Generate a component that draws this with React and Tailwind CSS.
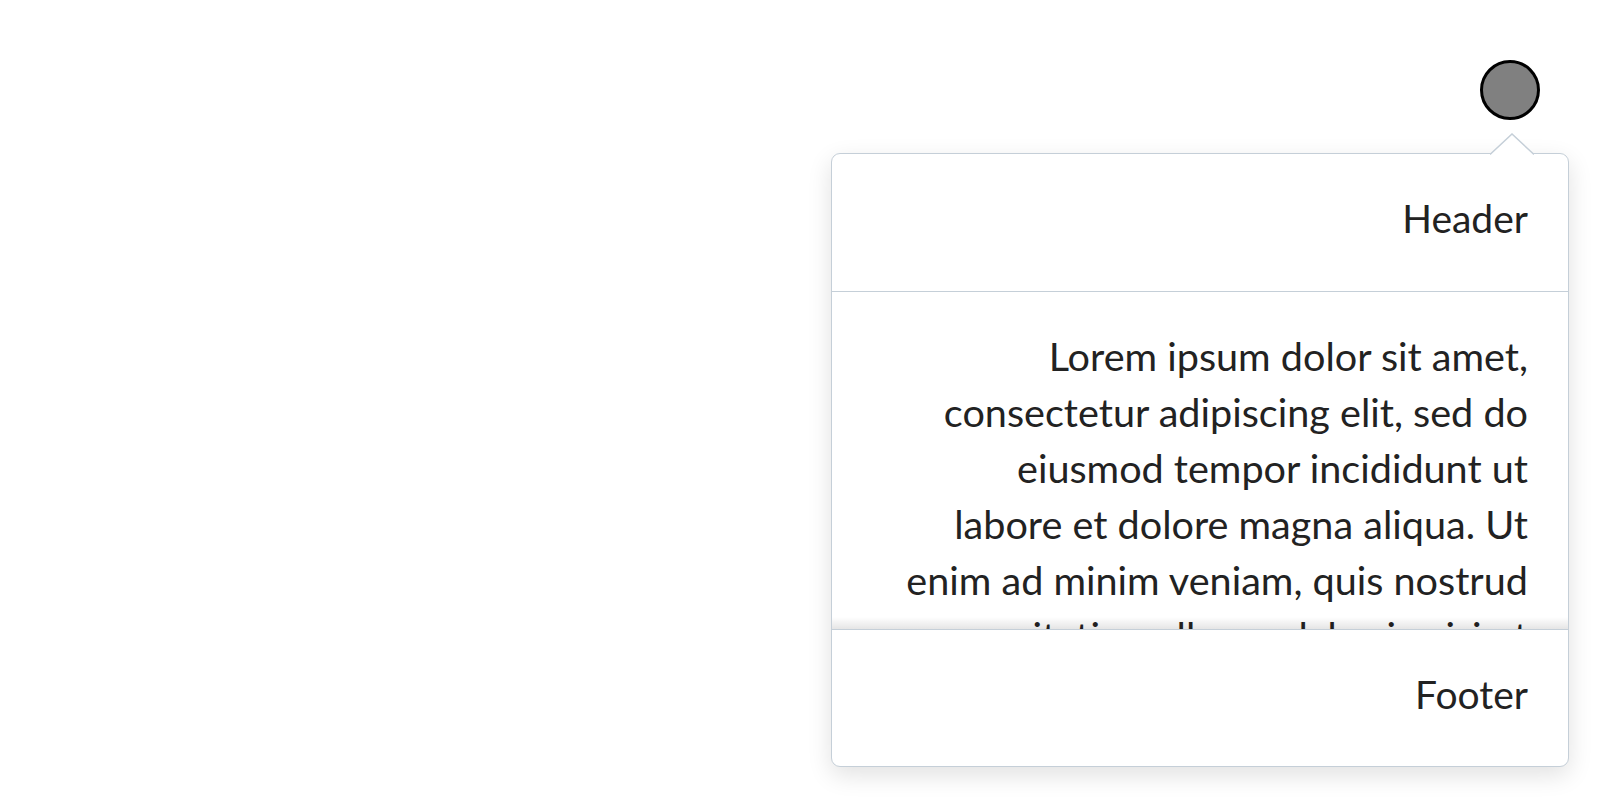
import React from "react";

const body =
  "Lorem ipsum dolor sit amet, consectetur adipiscing elit, sed do eiusmod tempor incididunt ut labore et dolore magna aliqua. Ut enim ad minim veniam, quis nostrud exercitation ullamco laboris nisi ut aliquip ex ea commodo consequat.";

const App = () => {
  return (
    <div
      className="relative w-full h-[800px] bg-white overflow-hidden"
      style={{ fontFamily: "Lato, 'Noto Sans', sans-serif" }}
    >
      <div className="flex justify-end pt-[60px] pr-[60px]">
        <div className="w-[60px] h-[60px] rounded-full bg-[#808080] border-[3px] border-black" />
      </div>

      {/* popover */}
      <div className="absolute top-[153px] right-[31px] w-[738px] h-[614px] flex flex-col bg-white border-[1.5px] border-[#c5cfd8] rounded-[9px] shadow-[0_8px_24px_rgba(0,0,0,0.12)] text-[#222] text-right">
        <svg
          className="absolute top-[-21px] left-[658px]"
          width="44"
          height="23"
          viewBox="0 0 44 23"
        >
          <path d="M0 22 L22 1 L44 22 Z" fill="#fff" />
          <path d="M0 21.5 L22 1 L44 21.5" fill="none" stroke="#c5cfd8" strokeWidth="1.5" />
        </svg>
        <div className="h-[138px] shrink-0 flex items-center justify-end px-10 pb-2 text-[39px] border-b-[1.5px] border-[#c5cfd8]">
          Header
        </div>
        <div className="relative flex-1 overflow-hidden px-10 pt-[36px]">
          <p className="ml-auto max-w-[626px] text-[39.6px] leading-[56px]">{body}</p>
          <div className="absolute bottom-0 left-0 right-0 h-[12px] bg-gradient-to-b from-transparent to-[rgba(0,0,0,0.1)]" />
        </div>
        <div className="h-[137px] shrink-0 flex items-center justify-end px-10 pb-2 text-[39px] border-t-[1.5px] border-[#c5cfd8]">
          Footer
        </div>
      </div>
    </div>
  );
};

export default App;
